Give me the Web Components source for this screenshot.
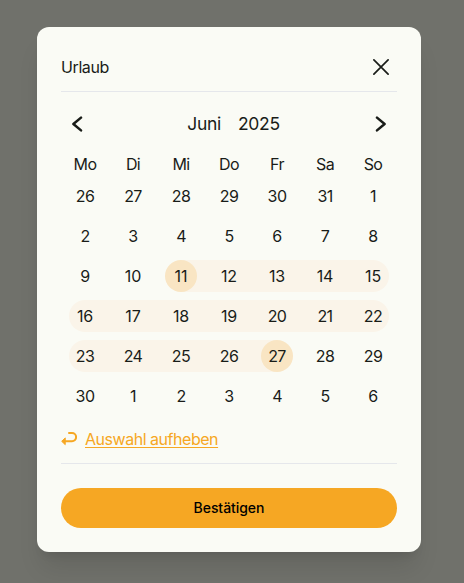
<!DOCTYPE html>
<html lang="de">
<head>
<meta charset="utf-8">
<title>Urlaub</title>
<style>
html,body{height:100%}
body{margin:0;background:#70716b;font-family:Inter,"Liberation Sans",sans-serif;font-size:16px;color:#191c18;overflow:hidden}
</style>
</head>
<body>
<vacation-dialog>
  <dialog-header slot="header">Urlaub</dialog-header>
  <month-nav month="Juni" year="2025"></month-nav>
  <month-grid></month-grid>
  <reset-link>Auswahl aufheben</reset-link>
  <confirm-button slot="footer">Bestätigen</confirm-button>
</vacation-dialog>
<script>
function define(name, html, setup) {
  customElements.define(name, class extends HTMLElement {
    constructor() {
      super();
      this.attachShadow({mode: 'open'}).innerHTML = html;
    }
    connectedCallback() { if (setup) setup(this, this.shadowRoot); }
  });
}

define('vacation-dialog', `<style>
:host{display:flex;flex-direction:column;box-sizing:border-box;width:384px;height:525px;margin:27px 0 0 37px;padding:24px;border-radius:12px;background:#fafbf5;box-shadow:0 20px 25px -5px rgba(0,0,0,.1),0 8px 10px -6px rgba(0,0,0,.1)}
.body{flex:1;border:solid #e5e7eb;border-width:1px 0;margin-bottom:24px;box-sizing:border-box}
</style><slot name="header"></slot><div class="body"><slot></slot></div><slot name="footer"></slot>`);

define('dialog-header', `<style>
:host{display:flex;align-items:flex-start;justify-content:space-between;height:40px;line-height:32px;padding-right:8px;box-sizing:border-box}
svg{display:block;margin-top:8px}
span{font-size:16px;letter-spacing:-.4px}
</style><span><slot></slot></span><svg width="16" height="16" viewBox="0 0 16 16" fill="none" stroke="#191c18" stroke-width="1.7" stroke-linecap="round"><path d="M.9.9 15.1 15.1M15.1.9.9 15.1"/></svg>`);

define('month-nav', `<style>
:host{display:flex;align-items:center;justify-content:space-between;height:64px;padding:0 10px}
div{display:flex;gap:17px;font-size:17.5px;letter-spacing:-.3px;padding:0 0 2px 9px}
svg{display:block}
</style><svg width="12" height="16" viewBox="0 0 12 16" fill="none" stroke="#191c18" stroke-width="2.5" stroke-linecap="round" stroke-linejoin="round"><path d="M10 1.6 2.4 8 10 14.4"/></svg>
<div><span id="m"></span><span id="y"></span></div>
<svg width="12" height="16" viewBox="0 0 12 16" fill="none" stroke="#191c18" stroke-width="2.5" stroke-linecap="round" stroke-linejoin="round"><path d="M2 1.6 9.6 8 2 14.4"/></svg>`,
(el, root) => {
  root.getElementById('m').textContent = el.getAttribute('month');
  root.getElementById('y').textContent = el.getAttribute('year');
});

define('day-cell', `<style>
:host{display:grid;place-items:center;height:32px;letter-spacing:-.6px}
:host([teen]){letter-spacing:-.1px}
:host([in-range]){background:#faf4e9}
:host([first]){margin-left:8px;padding-right:8px;border-radius:16px 0 0 16px}
:host([last]){margin-right:8px;padding-left:8px;border-radius:0 16px 16px 0}
:host([range-start]){background:linear-gradient(90deg,transparent 50%,#faf4e9 50%)}
:host([range-end]){background:linear-gradient(90deg,#faf4e9 50%,transparent 50%)}
span{display:grid;place-items:center;width:32px;height:32px;border-radius:50%}
:host([range-start]) span,:host([range-end]) span{background:#f9e5c3}
</style><span><slot></slot></span>`);

define('month-grid', `<style>
:host{display:grid;grid-template-columns:repeat(7,48px);row-gap:8px}
b{font-weight:400;text-align:center;line-height:32px;height:24px;margin-top:-8px;letter-spacing:-.6px}
</style>`, (el, root) => {
  for (const name of ['Mo','Di','Mi','Do','Fr','Sa','So']) {
    const head = document.createElement('b');
    head.textContent = name;
    root.append(head);
  }
  for (let i = 0; i < 42; i++) {
    const date = new Date(2025, 4, 26 + i);
    const cell = document.createElement('day-cell');
    cell.textContent = date.getDate();
    if (date.getDate() > 9 && date.getDate() < 20) cell.setAttribute('teen', '');
    if (i === 16) cell.setAttribute('range-start', '');
    else if (i === 32) cell.setAttribute('range-end', '');
    else if (i > 16 && i < 32) {
      cell.setAttribute('in-range', '');
      if (i % 7 === 0) cell.setAttribute('first', '');
      if (i % 7 === 6) cell.setAttribute('last', '');
    }
    root.append(cell);
  }
});

define('reset-link', `<style>
:host{display:flex;align-items:center;gap:8px;height:24px;margin-top:15px;color:#f6a723}
a{text-decoration:underline;text-underline-offset:2px;text-decoration-thickness:1px;letter-spacing:-.47px;line-height:24px}
</style><svg width="16" height="16" viewBox="0 0 16 16" fill="none" stroke="currentColor" stroke-width="2" stroke-linecap="round" stroke-linejoin="round"><path d="M8 2H11a4 4 0 0 1 0 8.2H3"/><path d="M4 7.2.7 10.3 4 13.4Z" fill="currentColor" stroke-width="1"/></svg><a><slot></slot></a>`);

define('confirm-button', `<style>
:host{display:block;height:40px;flex:none}
button{width:100%;height:40px;padding:0;border:0;border-radius:20px;background:#f6a723;color:#000;font:500 14px/40px Inter,"Liberation Sans",sans-serif;letter-spacing:-.05px}
</style><button><slot></slot></button>`);
</script>
</body>
</html>
